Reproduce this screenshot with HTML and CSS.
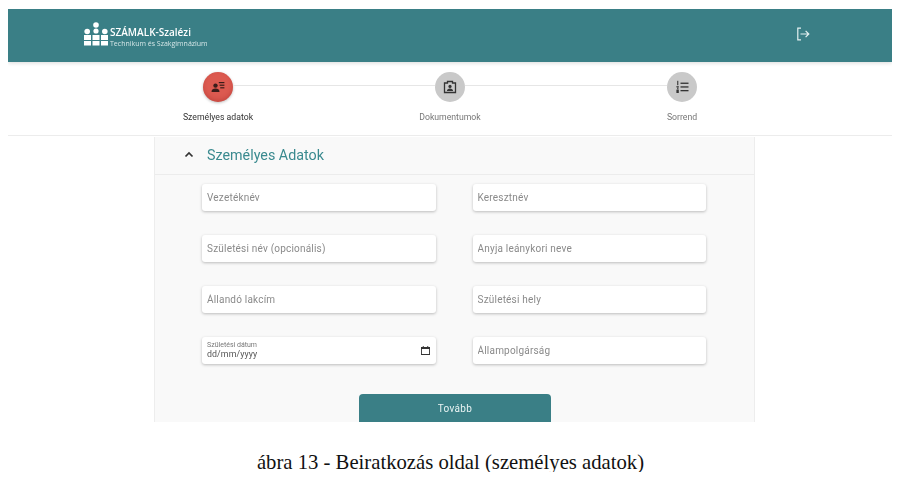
FILE: index.html
```html
<!DOCTYPE html>
<html>
<head>
  <meta name="viewport" content="width=device-width, initial-scale=1.0">
  <title>Beiratkozás</title>
  <link rel="stylesheet" href="styles.css">
</head>
<body>
  <div class="shot">
    <header class="topbar">
      <div class="logo">
        <svg class="logo-mark" width="24" height="24" viewBox="0 0 24 24" fill="#fff">
          <circle cx="12" cy="3" r="2.8"/>
          <circle cx="3.2" cy="9.5" r="2.8"/>
          <circle cx="12" cy="9" r="2.6"/>
          <circle cx="20.8" cy="9.5" r="2.8"/>
          <rect x="0" y="13" width="7" height="5"/>
          <rect x="8.5" y="13" width="7" height="5"/>
          <rect x="17" y="13" width="7" height="5"/>
          <rect x="0" y="19" width="7" height="4.5"/>
          <rect x="8.5" y="19" width="7" height="4.5"/>
          <rect x="17" y="19" width="7" height="4.5"/>
        </svg>
        <div class="logo-text">
          <div class="logo-name">SZÁMALK-Szalézi</div>
          <div class="logo-sub">Technikum és Szakgimnázium</div>
        </div>
      </div>
      <svg class="logout" width="14" height="14" viewBox="0 0 14 14" fill="none" stroke="#e4f1f1" stroke-width="1.2">
        <path d="M5 1.2H1.8v11.6H5"/>
        <path d="M4.5 7h8.3M9.6 3.9 12.8 7l-3.2 3.1"/>
      </svg>
    </header>

    <nav class="stepper">
      <div class="track">
        <div class="step-dot step-dot-active">
          <svg width="14" height="12" viewBox="0 0 14 12" fill="#3a1d1a">
            <circle cx="4.5" cy="4.6" r="2.2"/>
            <path d="M0.5 11c0-2.4 1.8-3.4 4-3.4s4 1 4 3.4z"/>
            <rect x="7.8" y="1" width="5.6" height="1.2"/>
            <rect x="8.6" y="3.6" width="4.8" height="1.2"/>
            <rect x="9.2" y="6.2" width="4.2" height="1.2"/>
          </svg>
        </div>
        <div class="track-line"></div>
        <div class="step-dot">
          <svg width="14" height="14" viewBox="0 0 14 14">
            <path d="M4.5 3V1.5h5V3h3v9.5h-11V3z" fill="none" stroke="#333" stroke-width="1.3"/>
            <circle cx="7" cy="6.4" r="1.6" fill="#333"/>
            <path d="M3.9 11c0-1.8 1.4-2.6 3.1-2.6s3.1.8 3.1 2.6z" fill="#333"/>
          </svg>
        </div>
        <div class="track-line"></div>
        <div class="step-dot">
          <svg width="14" height="14" viewBox="0 0 14 14" fill="#333">
            <rect x="5.5" y="2.6" width="8" height="1.3"/>
            <rect x="5.5" y="6.3" width="8" height="1.3"/>
            <rect x="5.5" y="10" width="8" height="1.3"/>
            <rect x="2.2" y="0.8" width="1.1" height="4.4"/>
            <rect x="1.4" y="6.2" width="2.4" height="1.2"/>
            <rect x="2.2" y="7.4" width="1.2" height="2"/>
            <rect x="1.4" y="9.6" width="2.4" height="3.4"/>
          </svg>
        </div>
      </div>
      <div class="step-labels">
        <div class="step-label step-label-active">Személyes adatok</div>
        <div class="step-label">Dokumentumok</div>
        <div class="step-label">Sorrend</div>
      </div>
    </nav>

    <main class="content">
      <div class="side">
        <div class="side-strip"></div>
      </div>
      <section class="card">
        <div class="card-head">
          <svg class="chevron" width="10" height="7" viewBox="0 0 10 7" fill="none" stroke="#333" stroke-width="1.7">
            <path d="M1.5 5.5 5 2l3.5 3.5"/>
          </svg>
          <h2>Személyes Adatok</h2>
        </div>
        <form class="form">
          <div class="fields">
            <input class="field" type="text" placeholder="Vezetéknév">
            <input class="field" type="text" placeholder="Keresztnév">
            <input class="field" type="text" placeholder="Születési név (opcionális)">
            <input class="field" type="text" placeholder="Anyja leánykori neve">
            <input class="field" type="text" placeholder="Állandó lakcím">
            <input class="field" type="text" placeholder="Születési hely">
            <div class="field field-date">
              <div>
                <div class="date-label">Születési dátum</div>
                <div class="date-value">dd/mm/yyyy</div>
              </div>
              <svg width="9" height="9" viewBox="0 0 10 10" fill="#333">
                <path d="M2 0h1v1h4V0h1v1h2v9H0V1h2zM1 3.4V9h8V3.4z"/>
              </svg>
            </div>
            <input class="field" type="text" placeholder="Állampolgárság">
          </div>
          <button class="next" type="button">Tovább</button>
        </form>
      </section>
    </main>
  </div>
  <p class="caption">ábra 13 - Beiratkozás oldal (személyes adatok)</p>
</body>
</html>
```

FILE: styles.css
```css
body {
  margin: 0;
  background-color: #ffffff;
  font-family: 'Roboto', sans-serif;
  color: #333;
}
.shot {
  width: 884px;
  height: 413px;
  margin: 9px 0 0 8px;
  overflow: hidden;
  filter: blur(0.6px);
}
.topbar {
  height: 53px;
  box-sizing: border-box;
  padding: 0 82px 0 76px;
  display: flex;
  align-items: center;
  justify-content: space-between;
  background-color: #3a7f86;
  box-shadow: 0 1px 4px rgba(0, 0, 0, 0.15);
}
.logo {
  display: flex;
  align-items: center;
  gap: 2px;
  color: #fff;
  margin-top: -3px;
}
.logo-text {
  padding-top: 5px;
}
.logo-name {
  font-family: 'Open Sans', sans-serif;
  font-size: 10px;
  font-weight: 600;
  line-height: 13px;
}
.logo-sub {
  font-family: 'Open Sans', sans-serif;
  font-size: 7px;
  line-height: 9px;
  color: #d5e6e7;
}
.logout {
  margin-top: -3px;
}
.stepper {
  height: 74px;
  box-sizing: border-box;
  padding-top: 10px;
  border-bottom: 1px solid #ececec;
}
.track {
  width: 494px;
  margin-left: 195px;
  display: flex;
  align-items: center;
}
.track-line {
  flex: 1;
  height: 1px;
  margin-top: -3px;
  background-color: #e6e6e6;
}
.step-dot {
  width: 30px;
  height: 30px;
  border-radius: 50%;
  background-color: #c9c9c9;
  display: flex;
  align-items: center;
  justify-content: center;
}
.step-dot-active {
  background-color: #dc5a50;
  box-shadow: 0 1px 3px rgba(0, 0, 0, 0.25), inset 0 -2px 4px rgba(150, 30, 25, 0.3);
}
.step-labels {
  width: 696px;
  margin: 9px 0 0 94px;
  display: grid;
  grid-template-columns: repeat(3, 232px);
}
.step-label {
  text-align: center;
  font-size: 8.7px;
  line-height: 12px;
  color: #777;
}
.step-label-active {
  color: #333;
}
.content {
  display: grid;
  grid-template-columns: 146px 601px;
  height: 286px;
  margin-top: 1px;
}
.side {
  display: flex;
  align-items: flex-end;
}
.side-strip {
  width: 124px;
  height: 4px;
  background-color: #f6f6f6;
}
.card {
  background-color: #f9f9f9;
  border-left: 1px solid #ededed;
  border-right: 1px solid #ededed;
}
.card-head {
  height: 38px;
  box-sizing: border-box;
  padding-left: 29px;
  padding-bottom: 2px;
  display: flex;
  align-items: center;
  gap: 13px;
  border-bottom: 1px solid #ececec;
}
.card-head h2 {
  margin: 0;
  font-size: 14.3px;
  font-weight: 400;
  color: #3a8a8f;
}
.form {
  padding: 9px 48px 0 47px;
}
.fields {
  display: grid;
  grid-template-columns: 234px 233px;
  column-gap: 36.5px;
  row-gap: 24px;
}
.field {
  height: 27px;
  box-sizing: border-box;
  padding: 0 5px;
  border: none;
  border-radius: 3px;
  background-color: #fff;
  box-shadow: 0 1px 3px rgba(0, 0, 0, 0.25);
  font-family: 'Roboto', sans-serif;
  font-size: 10px;
  letter-spacing: 0.2px;
}
.field::placeholder {
  color: #8a8a8a;
}
.field-date {
  display: flex;
  align-items: center;
  justify-content: space-between;
  padding-right: 6px;
}
.date-label {
  font-size: 7px;
  line-height: 8px;
  color: #777;
  letter-spacing: 0;
}
.date-value {
  font-size: 8.8px;
  line-height: 11px;
  color: #555;
  letter-spacing: 0.1px;
}
.next {
  display: block;
  width: 192px;
  height: 34px;
  margin: 30px 0 0 157px;
  padding: 0 0 5px;
  border: none;
  border-radius: 4px;
  background-color: #3a7f86;
  color: #e8f3f3;
  font-family: 'Roboto', sans-serif;
  font-size: 10px;
  letter-spacing: 0.3px;
}
.caption {
  margin: 30px 0 0;
  padding-right: 5px;
  text-align: center;
  font-family: 'Liberation Serif', serif;
  font-size: 20.7px;
  line-height: 20px;
  color: #111;
}
```
